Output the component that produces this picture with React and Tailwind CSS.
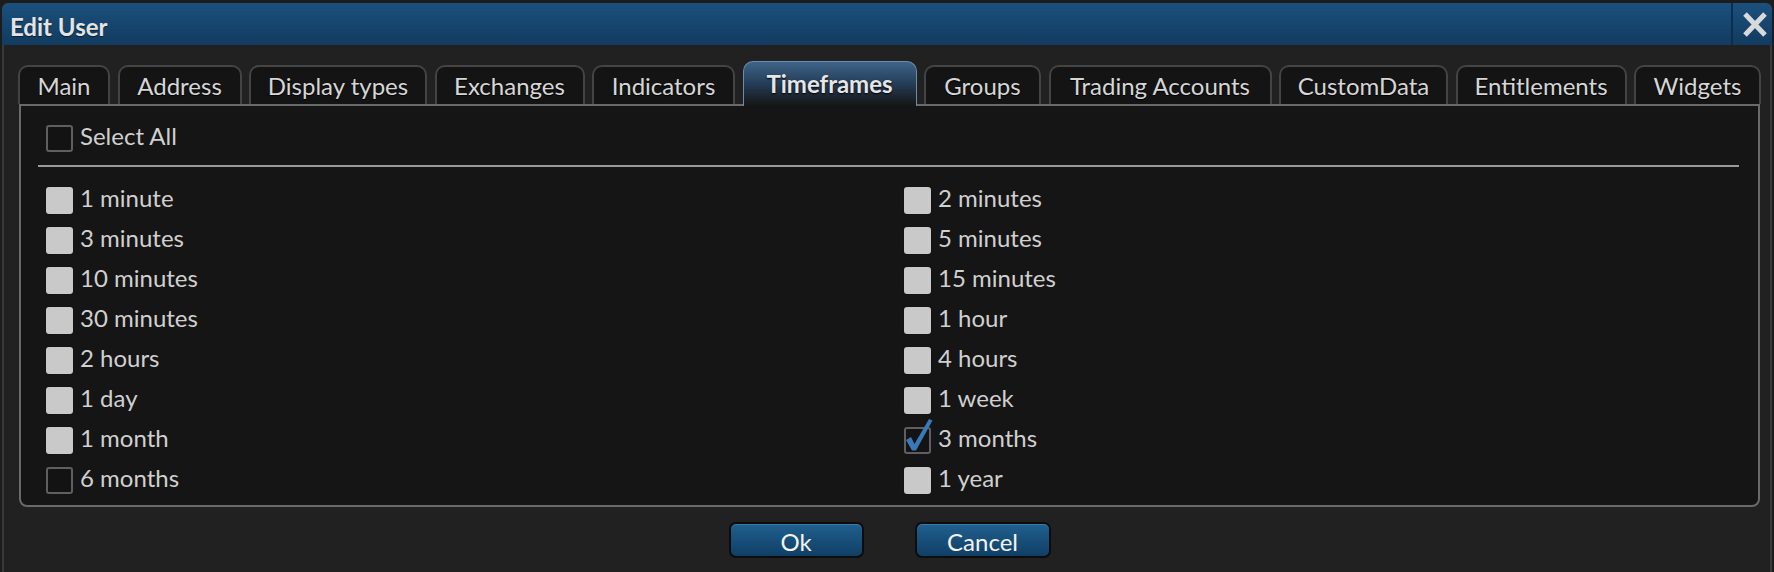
import React from 'react';

const TABS = [
  { label: 'Main', w: 'w-[92px]' },
  { label: 'Address', w: 'w-[124px]' },
  { label: 'Display types', w: 'w-[178px]' },
  { label: 'Exchanges', w: 'w-[150px]' },
  { label: 'Indicators', w: 'w-[143px]' },
  { label: 'Timeframes', w: 'w-[174px]', active: true },
  { label: 'Groups', w: 'w-[117px]' },
  { label: 'Trading Accounts', w: 'w-[223px]' },
  { label: 'CustomData', w: 'w-[169px]' },
  { label: 'Entitlements', w: 'w-[171px]' },
  { label: 'Widgets', w: 'w-[127px]' },
];

const LEFT = [
  { label: '1 minute', kind: 'filled' },
  { label: '3 minutes', kind: 'filled' },
  { label: '10 minutes', kind: 'filled' },
  { label: '30 minutes', kind: 'filled' },
  { label: '2 hours', kind: 'filled' },
  { label: '1 day', kind: 'filled' },
  { label: '1 month', kind: 'filled' },
  { label: '6 months', kind: 'empty' },
];

const RIGHT = [
  { label: '2 minutes', kind: 'filled' },
  { label: '5 minutes', kind: 'filled' },
  { label: '15 minutes', kind: 'filled' },
  { label: '1 hour', kind: 'filled' },
  { label: '4 hours', kind: 'filled' },
  { label: '1 week', kind: 'filled' },
  { label: '3 months', kind: 'checked' },
  { label: '1 year', kind: 'filled' },
];

function Box({ kind }) {
  if (kind === 'filled') {
    return <span className="w-[27px] h-[27px] shrink-0 rounded-[3px] bg-[#c9c9c9] shadow-[0_0_1px_#000]" />;
  }
  return (
    <span className="relative w-[27px] h-[27px] shrink-0 rounded-[3px] border-2 border-[#5f5f5f] bg-[#131313]">
      {kind === 'checked' && (
        <svg
          className="absolute left-[-2px] top-[-2px] overflow-visible"
          width="27"
          height="27"
          viewBox="0 0 27 27"
        >
          <path d="M2 13 L7 10 L10.5 17 L25 -8 L28.5 -6.5 L12 23.5 L8 23.5 Z" fill="#3a79b7" />
        </svg>
      )}
    </span>
  );
}

function Row({ item }) {
  return (
    <div className="h-[40px] flex items-center gap-[7px]">
      <Box kind={item.kind} />
      <span className="mb-[5px] text-[24px] text-[#d0d0d0]">{item.label}</span>
    </div>
  );
}

export default function App() {
  return (
    <div className="w-[1774px] h-[572px] overflow-hidden bg-[#1c1c1c] pt-[3px] px-[2px] font-['Lato',sans-serif]">
      <div className="h-full flex flex-col">
        {/* title bar */}
        <div className="h-[42px] shrink-0 flex items-stretch rounded-t-[6px] bg-linear-to-b from-[#1b507d] to-[#123b60]">
          <div className="flex-1 flex items-center pl-[8px] pt-[5px] text-[24px] font-bold text-[#e4e4e4] [text-shadow:0_1px_1px_#0a1e30]">
            Edit User
          </div>
          <div className="w-[2px] bg-[#0c2e4e]" />
          <div className="w-[39px] flex items-center justify-center pl-[4px]">
            <svg width="26" height="27" viewBox="0 0 26 27">
              <path d="M3 3 L23 24 M23 3 L3 24" stroke="#d9d9d9" strokeWidth="5" />
            </svg>
          </div>
        </div>

        {/* body */}
        <div className="flex-1 bg-[#212121] border-x-2 border-[#393939] pl-[15px]">
          <div className="mt-[16px] h-[43px] flex items-end gap-[7.5px] -ml-[1px]">
            {TABS.map((t) =>
              t.active ? (
                <div
                  key={t.label}
                  className={`${t.w} relative z-10 h-[45px] -mb-[2px] flex items-center justify-center rounded-t-[10px] border-t border-x border-[#6f8ca8] bg-linear-to-b from-[#3e6489] via-[#243d57] to-[#151515] text-[24px] font-bold text-[#e6e6e6] [text-shadow:0_1px_2px_#000]`}
                >
                  {t.label}
                </div>
              ) : (
                <div
                  key={t.label}
                  className={`${t.w} h-[39px] flex items-center justify-center rounded-t-[10px] border-2 border-b-0 border-[#444444] bg-[#141414] text-[24px] text-[#d6d6d6] [text-shadow:0_1px_1px_#000]`}
                >
                  {t.label}
                </div>
              )
            )}
          </div>

          {/* content box */}
          <div className="w-[1741px] border-2 border-[#6a6a6a] rounded-b-[8px] bg-[#151515] pt-[19px] pb-[5px]">
            <div className="h-[27px] pl-[25px] flex items-center gap-[7px]">
              <Box kind="empty" />
              <span className="mb-[5px] text-[24px] text-[#d0d0d0]">Select All</span>
            </div>
            <div className="mt-[13px] ml-[17px] mr-[19px] h-[2px] bg-[#9a9a9a]" />
            <div className="mt-[13px] pl-[25px] grid grid-cols-[858px_1fr]">
              <div className="flex flex-col">
                {LEFT.map((it) => (
                  <Row key={it.label} item={it} />
                ))}
              </div>
              <div className="flex flex-col">
                {RIGHT.map((it) => (
                  <Row key={it.label} item={it} />
                ))}
              </div>
            </div>
          </div>

          {/* buttons */}
          <div className="mt-[15px] w-[1741px] flex justify-center gap-[51px]">
            <button className="w-[135px] h-[36px] rounded-[7px] border-2 border-[#0c0c0c] bg-linear-to-b from-[#21608f] to-[#0f3f66] shadow-[inset_0_1px_0_#3a78a8] text-[24px] text-[#f2f2f2]">
              Ok
            </button>
            <button className="w-[136px] h-[36px] rounded-[7px] border-2 border-[#0c0c0c] bg-linear-to-b from-[#21608f] to-[#0f3f66] shadow-[inset_0_1px_0_#3a78a8] text-[24px] text-[#f2f2f2]">
              Cancel
            </button>
          </div>
        </div>
      </div>
    </div>
  );
}
